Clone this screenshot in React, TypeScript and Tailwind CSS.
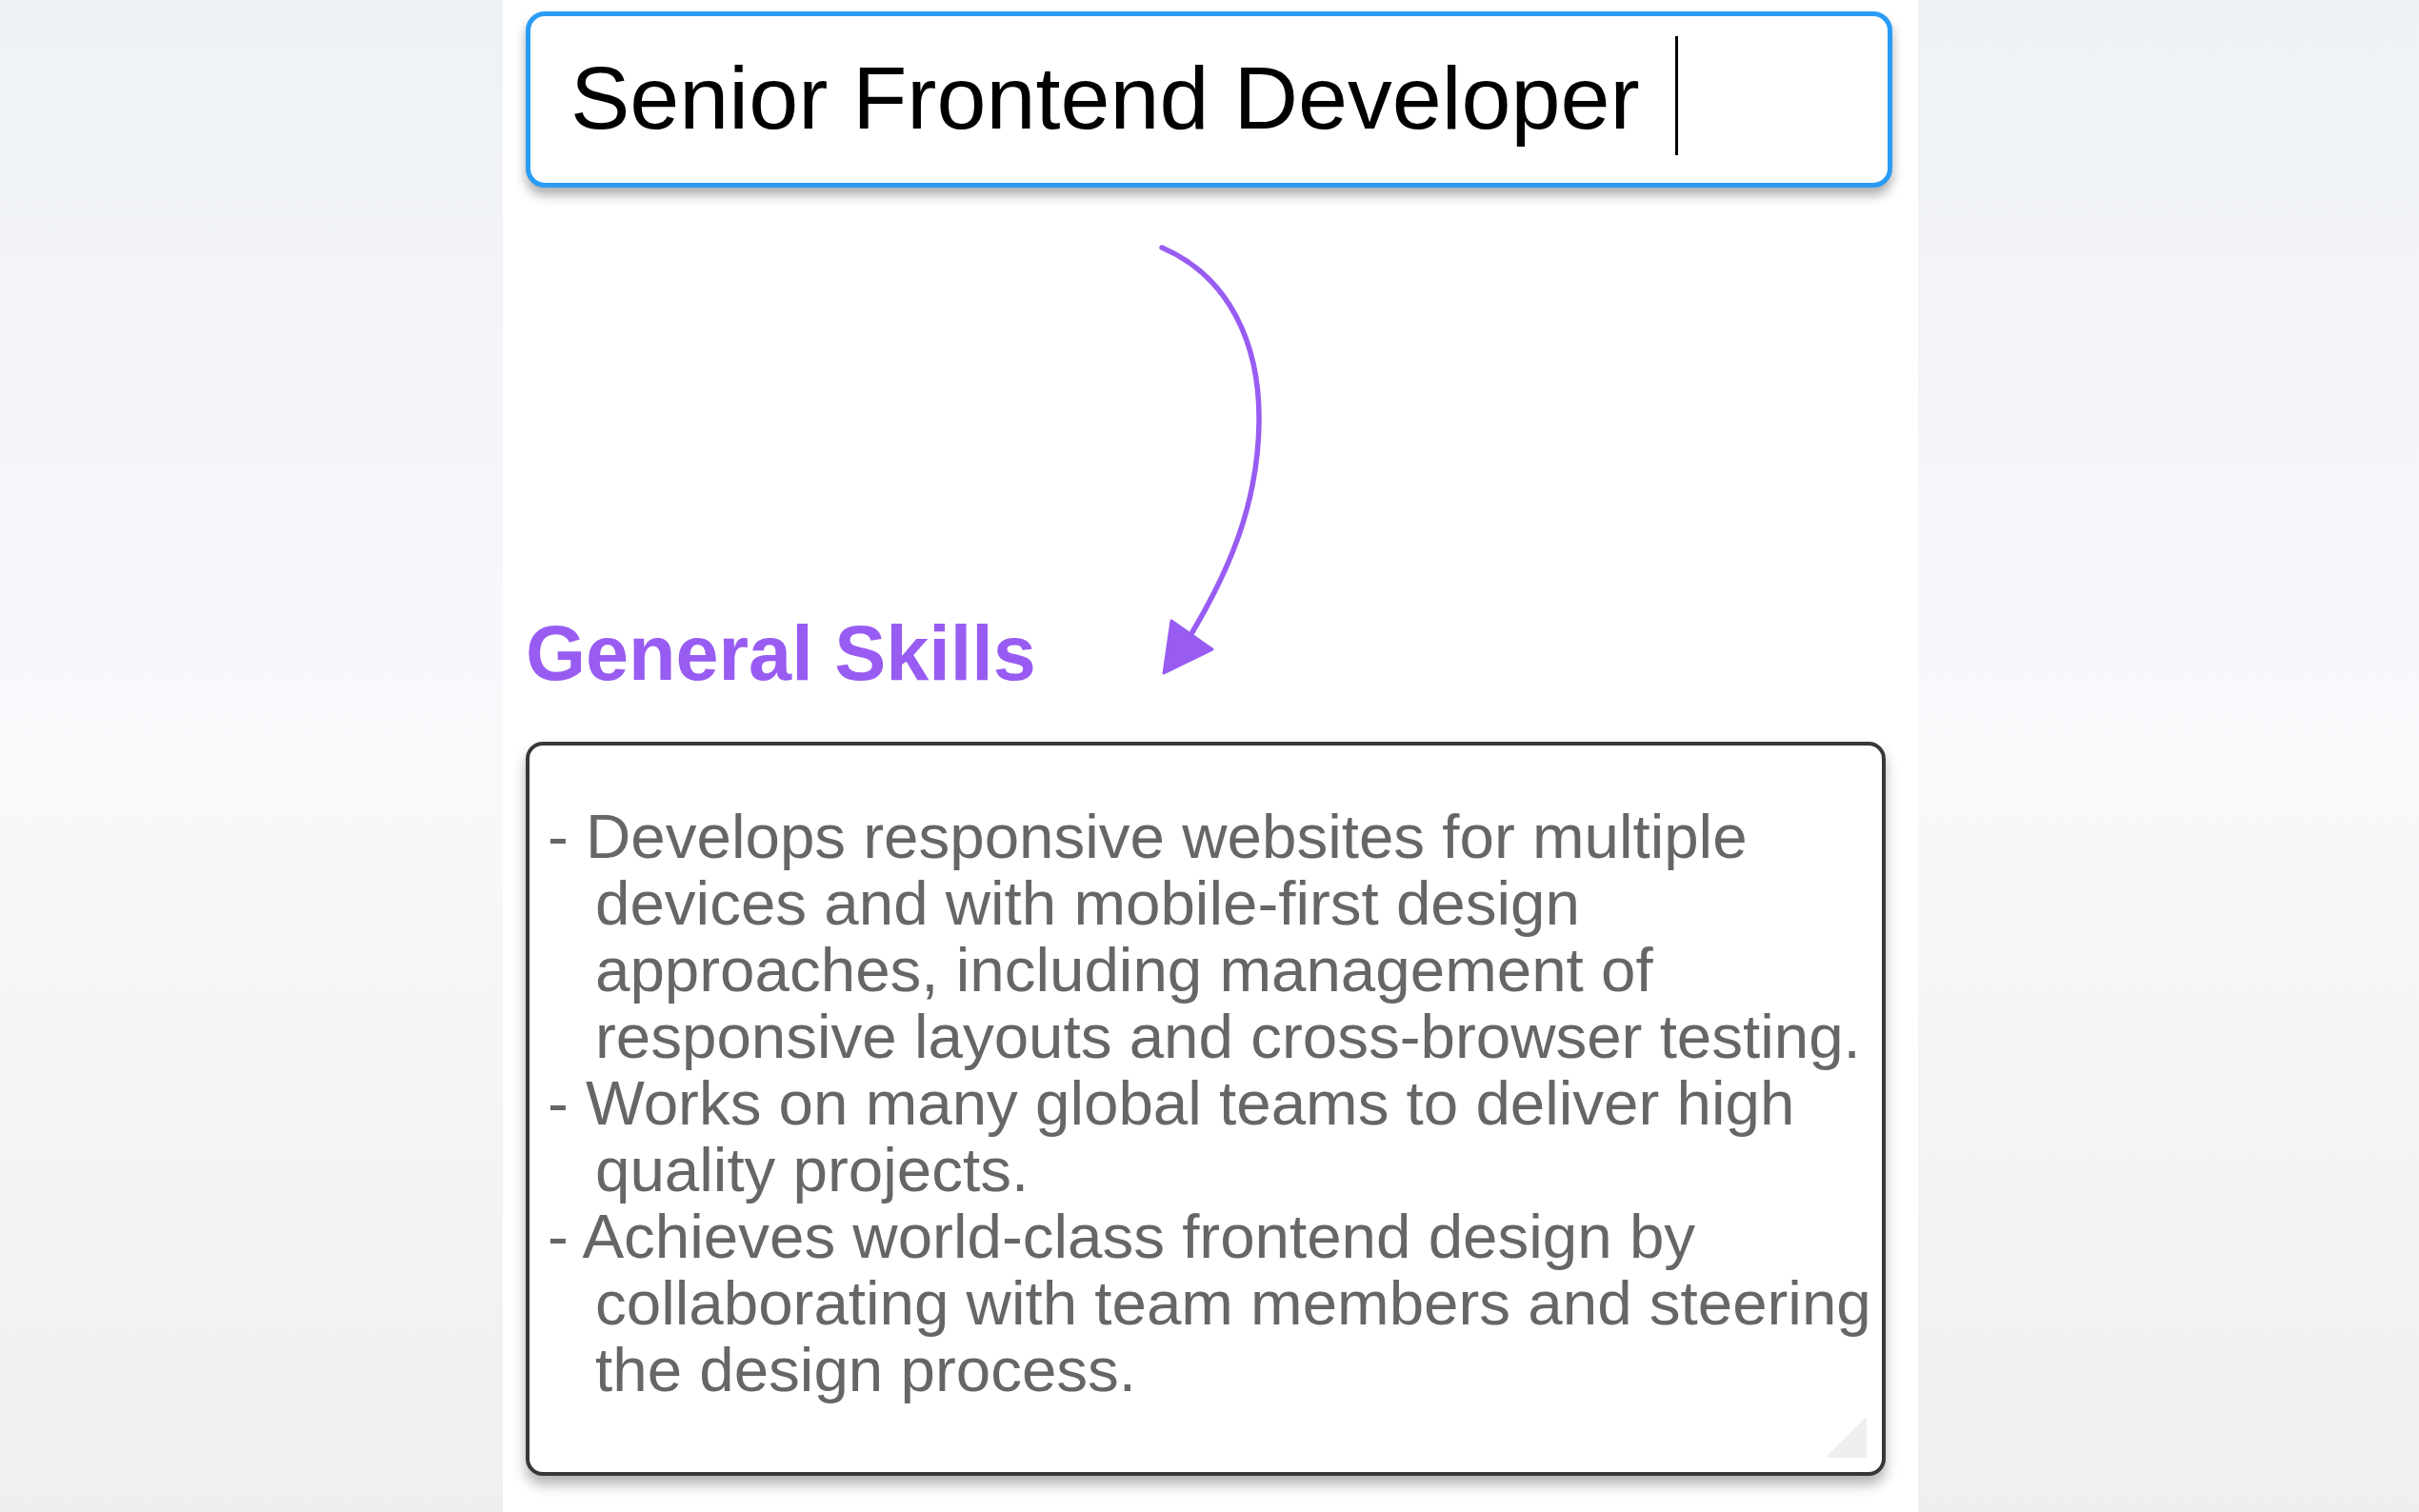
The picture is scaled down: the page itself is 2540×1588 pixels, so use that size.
import React from "react";

const font = { fontFamily: '"Liberation Sans", Arial, Helvetica, sans-serif' };

const items: string[][] = [
  [
    "Develops responsive websites for multiple",
    "devices and with mobile-first design",
    "approaches, including management of",
    "responsive layouts and cross-browser testing.",
  ],
  ["Works on many global teams to deliver high", "quality projects."],
  [
    "Achieves world-class frontend design by",
    "collaborating with team members and steering",
    "the design process.",
  ],
];

function Arrow() {
  return (
    <svg
      className="absolute left-0 top-0 pointer-events-none"
      width="1486"
      height="800"
      viewBox="528 0 1486 800"
    >
      <path
        d="M1220 260 C1290 290 1323 360 1322 443 C1321 530 1290 600 1252 664"
        fill="none"
        stroke="#985cf2"
        strokeWidth="5.5"
        strokeLinecap="round"
      />
      <polygon
        points="1230,652 1273,682 1222,707"
        fill="#985cf2"
        stroke="#985cf2"
        strokeWidth="3"
        strokeLinejoin="round"
      />
    </svg>
  );
}

export default function App() {
  return (
    <div
      className="min-h-screen w-full flex bg-linear-to-b from-[#eef1f5] via-[#f9f9fc] to-[#efefef] pl-[528px]"
      style={font}
    >
      <div className="relative w-[1486px] min-h-screen bg-white pt-[12px] pl-[24px] flex flex-col">
        <Arrow />
        <div className="w-[1435px] h-[185px] border-[5px] border-[#2a9cf5] rounded-[20px] bg-white shadow-[0_8px_12px_rgba(0,0,0,0.32)] flex items-start pl-[42px]">
          <span className="mt-[39px] text-[93.5px] leading-none text-black whitespace-nowrap">
            Senior Frontend Developer
          </span>
          <span className="mt-[21px] ml-[37px] h-[125px] w-[3px] bg-black" />
        </div>

        <h2 className="mt-[449px] text-[81px] font-bold leading-none text-[#985cf2] whitespace-nowrap">
          General Skills
        </h2>

        <div className="relative mt-[52px] w-[1428px] h-[771px] border-4 border-[#383838] rounded-[18px] bg-white shadow-[0_9px_14px_rgba(0,0,0,0.3)] pt-[61px] pl-[69px] text-[65.5px] leading-[70px] text-[#666666]">
          {items.map((lines, i) => (
            <div key={i}>
              {lines.map((l, j) => (
                <div key={j} className={`whitespace-nowrap ${j === 0 ? "-ml-[50px]" : ""}`}>
                  {j === 0 ? "- " + l : l}
                </div>
              ))}
            </div>
          ))}
          <svg
            className="absolute right-[15px] bottom-[14px]"
            width="44"
            height="44"
            viewBox="0 0 44 44"
          >
            <polygon points="42,2 42,42 2,42" fill="#efefef" stroke="#efefef" strokeWidth="2" strokeLinejoin="round" />
          </svg>
        </div>
      </div>
    </div>
  );
}
